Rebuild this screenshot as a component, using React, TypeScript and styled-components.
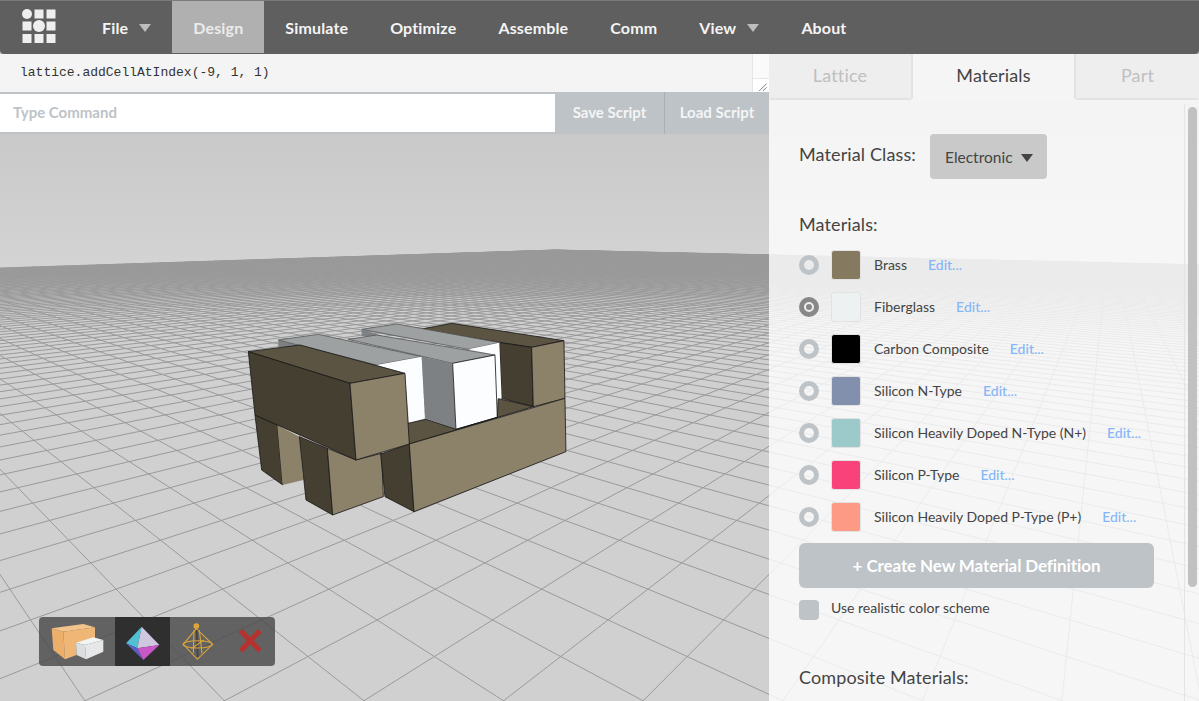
import React, { useMemo } from 'react';
import styled, { createGlobalStyle } from 'styled-components';

const GlobalStyle = createGlobalStyle`
    html, body {
        margin: 0;
        height: 100%;
        overflow: hidden;
        background: #cbcbcb;
        font-family: "Lato", "Liberation Sans", sans-serif;
    }
    * {
        box-sizing: border-box;
    }
`;

const navItems = [
    { label: 'File', caret: true },
    { label: 'Design', active: true },
    { label: 'Simulate' },
    { label: 'Optimize' },
    { label: 'Assemble' },
    { label: 'Comm' },
    { label: 'View', caret: true },
    { label: 'About' },
];

const materials = [
    { name: 'Brass', color: '#85795f' },
    { name: 'Fiberglass', color: '#eef1f2', selected: true },
    { name: 'Carbon Composite', color: '#000000' },
    { name: 'Silicon N-Type', color: '#8290ad' },
    { name: 'Silicon Heavily Doped N-Type (N+)', color: '#9ccaca' },
    { name: 'Silicon P-Type', color: '#f9427a' },
    { name: 'Silicon Heavily Doped P-Type (P+)', color: '#fd9a86' },
];

// perspective of the ground plane: far corner and the two vanishing points
const APEX = [555, 250];
const VP_RIGHT = [1110, 232];
const VP_LEFT = [-230, 232];
const CELL = 0.004;
const PHASE = 0.0008;
const W_MAX = 0.975;

const project = (s: number, t: number) => {
    const d = 1 - s - t;
    const x = (APEX[0] - s * VP_RIGHT[0] - t * VP_LEFT[0]) / d;
    const y = (APEX[1] - s * VP_RIGHT[1] - t * VP_LEFT[1]) / d;
    return `${x.toFixed(1)} ${y.toFixed(1)}`;
};

const buildGrid = () => {
    let d = '';
    for (let a = PHASE; a < W_MAX; a += CELL) {
        d += `M${project(a, 0)}L${project(a, W_MAX - a)}`;
        d += `M${project(0, a)}L${project(W_MAX - a, a)}`;
    }
    return d;
};

const Logo: React.FC = () => (
    <LogoMark viewBox="0 0 34 35">
        <circle cx="5" cy="5" r="5" fill="#efefef" />
        <rect x="12.5" y="0.5" width="9" height="9" fill="#efefef" />
        <rect x="24.5" y="0.5" width="9" height="9" fill="#efefef" />
        <rect x="0.5" y="12.5" width="9" height="9" fill="#efefef" />
        <circle cx="17" cy="17" r="6" fill="#efefef" />
        <rect x="24.5" y="12.5" width="9" height="9" fill="#efefef" />
        <rect x="0.5" y="25" width="9" height="9" fill="#efefef" />
        <rect x="12.5" y="25" width="9" height="9" fill="#efefef" />
        <rect x="24.5" y="25" width="9" height="9" fill="#efefef" />
    </LogoMark>
);

const Scene: React.FC = () => {
    const grid = useMemo(buildGrid, []);
    return (
        <SceneCanvas viewBox="0 54 1199 647">
            <defs>
                <linearGradient id="sky" x1="0" y1="0" x2="0" y2="1">
                    <stop offset="0" stopColor="#c9c9c9" />
                    <stop offset="1" stopColor="#d4d4d4" />
                </linearGradient>
            </defs>
            <rect x="0" y="134" width="1199" height="140" fill="url(#sky)" />
            <rect x="0" y="54" width="1199" height="80" fill="#c9c9c9" />
            <polygon points="555,250 1300,269 1300,800 -100,800 -100,271" fill="#d0d0d0" />
            <path d={grid} stroke="#9a9a9a" strokeWidth="1" fill="none" />

            {/* the lattice model, coordinates at 3x */}
            <g transform="translate(220 300) scale(0.3333)" stroke="#161616" strokeWidth="2.4" strokeLinejoin="round">
                <polygon points="600,88 695,70 1032,122 935,142" fill="#5c5442" />
                <polygon points="838,128 935,142 940,320 845,295" fill="#453f31" />
                <polygon points="935,142 1032,122 1035,295 940,320" fill="#8c8169" />
                <polygon points="425,88 530,72 840,128 745,148" fill="#9da1a2" stroke="#555" />
                <polygon points="425,88 425,108 500,112" fill="#7e8184" stroke="none" />
                <polygon points="745,148 838,128 845,295 830,300 825,165" fill="#fbfdff" stroke="none" />
                <polygon points="175,120 175,142 260,142" fill="#7e8184" stroke="none" />
                <polygon points="175,120 295,103 605,170 470,195" fill="#9da1a2" stroke="#555" />
                <polygon points="385,118 470,105 825,165 698,190" fill="#9da1a2" stroke="#555" />
                <polygon points="470,195 605,170 615,355 568,370 555,220" fill="#fbfdff" stroke="none" />
                <polygon points="605,170 698,190 708,388 615,355" fill="#7e8184" stroke="none" />
                <polygon points="698,190 825,165 832,352 708,388" fill="#fbfdff" />
                <polygon points="555,372 618,358 708,388 832,352 835,296 940,320 568,432" fill="#5c5442" />
                <polygon points="105,345 172,375 188,555 125,510" fill="#453f31" />
                <polygon points="172,375 238,410 250,540 188,555" fill="#8c8169" stroke="none" />
                <polygon points="238,410 322,445 338,645 258,600" fill="#453f31" />
                <polygon points="322,445 408,480 485,460 490,590 338,645" fill="#8c8169" />
                <polygon points="482,462 568,432 582,635 495,590" fill="#453f31" />
                <polygon points="568,432 1035,295 1038,455 582,635" fill="#8c8169" />
                <polygon points="85,155 240,135 555,220 390,250" fill="#5c5442" />
                <polygon points="85,155 390,250 408,480 105,345" fill="#453f31" />
                <polygon points="390,250 555,220 568,432 408,480" fill="#8c8169" />
            </g>
        </SceneCanvas>
    );
};

const ViewToolbar: React.FC = () => (
    <Toolbar>
        <Thumb $width={76}>
            <svg viewBox="57 51 228 147" width="76" height="49">
                <polygon points="95,85 190,72 225,82 130,95" fill="#f2c48c" />
                <polygon points="95,85 130,95 135,178 100,150" fill="#ebae6b" />
                <polygon points="130,95 225,82 225,125 168,128 170,165 135,178" fill="#efb676" />
                <polygon points="168,128 220,112 250,120 195,135" fill="#f3f4f4" />
                <polygon points="168,128 195,135 198,178 170,165" fill="#dcdee0" />
                <polygon points="195,135 250,120 250,155 198,178" fill="#e6e7e8" />
            </svg>
        </Thumb>
        <Thumb $width={55} $active>
            <svg viewBox="285 51 165 147" width="55" height="49">
                <polygon points="365,80 318,130 352,145" fill="#50c0d2" />
                <polygon points="365,80 352,145 418,135" fill="#cfc6e0" />
                <polygon points="318,130 352,145 370,180" fill="#5a60c2" />
                <polygon points="352,145 418,135 370,180" fill="#c858c8" />
            </svg>
        </Thumb>
        <Thumb $width={55}>
            <svg viewBox="450 51 165 147" width="55" height="49" fill="none" stroke="#dda63a" strokeWidth="3.2">
                <circle cx="529" cy="78" r="7" fill="#dda63a" />
                <path d="M529 86 L490 133 L532 178 L578 133 Z" />
                <path d="M530 90 L533 170" stroke="#444" strokeWidth="5" />
                <path d="M522 90 L520 160 M538 90 L546 160" />
                <ellipse cx="533" cy="133" rx="44" ry="11" />
                <path d="M514 146 L552 120" />
            </svg>
        </Thumb>
        <Thumb $width={50}>
            <svg viewBox="615 51 150 147" width="50" height="49" stroke="#b5322f" strokeWidth="15">
                <path d="M662 92 L720 152 M720 92 L662 152" />
            </svg>
        </Thumb>
    </Toolbar>
);

const App: React.FC = () => {
    return (
        <>
            <GlobalStyle />
            <Page>
                <TopNav>
                    <LogoSlot>
                        <Logo />
                    </LogoSlot>
                    {navItems.map((item) => (
                        <NavItem key={item.label} $active={item.active}>
                            {item.label}
                            {item.caret && <NavCaret />}
                        </NavItem>
                    ))}
                </TopNav>
                <Workspace>
                    <Scene />
                    <MainColumn>
                        <CommandLog>
                            <LogText>lattice.addCellAtIndex(-9, 1, 1)</LogText>
                            <LogGutter>
                                <ResizeGrip viewBox="0 0 16 14">
                                    <path d="M6 13 L14 5 M10 13 L14 9" stroke="#777" strokeWidth="1" />
                                </ResizeGrip>
                            </LogGutter>
                        </CommandLog>
                        <CommandBar>
                            <CommandInput placeholder="Type Command" readOnly />
                            <ScriptButton $width={109}>Save Script</ScriptButton>
                            <ScriptButton $width={105} $divider>Load Script</ScriptButton>
                        </CommandBar>
                        <ViewToolbar />
                    </MainColumn>
                    <SidePanel>
                        <Tabs>
                            <Tab $width={142}>Lattice</Tab>
                            <Tab $width={165} $active>Materials</Tab>
                            <Tab $width={123}>Part</Tab>
                        </Tabs>
                        <PanelBody>
                            <ClassRow>
                                <SectionLabel>Material Class:</SectionLabel>
                                <ClassSelect>
                                    Electronic
                                    <SelectCaret />
                                </ClassSelect>
                            </ClassRow>
                            <MaterialsLabel>Materials:</MaterialsLabel>
                            <MaterialList>
                                {materials.map((m) => (
                                    <MaterialRow key={m.name}>
                                        <Radio $selected={m.selected} />
                                        <Swatch $color={m.color} />
                                        <MaterialName>{m.name}</MaterialName>
                                        <EditLink>Edit...</EditLink>
                                    </MaterialRow>
                                ))}
                            </MaterialList>
                            <CreateButton>+ Create New Material Definition</CreateButton>
                            <CheckRow>
                                <CheckBox />
                                <CheckLabel>Use realistic color scheme</CheckLabel>
                            </CheckRow>
                            <CompositeLabel>Composite Materials:</CompositeLabel>
                        </PanelBody>
                        <ScrollTrack>
                            <ScrollThumb />
                        </ScrollTrack>
                    </SidePanel>
                </Workspace>
            </Page>
        </>
    );
};

const Page = styled.div`
    display: flex;
    flex-direction: column;
    width: 1199px;
    height: 701px;
    overflow: hidden;
    background: #c9c9c9;
`;

const TopNav = styled.nav`
    display: flex;
    align-items: stretch;
    height: 54px;
    padding-bottom: 1px;
    background: #5f5f5f;
    border-top: 1px solid #7b7b7b;
    border-radius: 0 0 4px 4px;
    position: relative;
    z-index: 2;
`;

const LogoSlot = styled.div`
    display: flex;
    width: 81px;
    padding: 8px 0 0 22px;
`;

const LogoMark = styled.svg`
    width: 34px;
    height: 35px;
`;

const NavItem = styled.div<{ $active?: boolean }>`
    display: flex;
    align-items: center;
    padding: 0 21px;
    font-size: 16px;
    font-weight: 700;
    letter-spacing: 0.15px;
    color: ${({ $active }) => ($active ? '#ebebeb' : '#f4f4f4')};
    background: ${({ $active }) => ($active ? '#b0b0b0' : 'transparent')};
`;

const NavCaret = styled.span`
    width: 0;
    height: 0;
    margin: 2px 0 0 11px;
    border-left: 6px solid transparent;
    border-right: 6px solid transparent;
    border-top: 8px solid #bdbdbd;
`;

const Workspace = styled.div`
    position: relative;
    display: flex;
    flex: 1;
    min-height: 0;
`;

const SceneCanvas = styled.svg`
    position: absolute;
    inset: 0;
    width: 1199px;
    height: 647px;
`;

const MainColumn = styled.div`
    position: relative;
    width: 769px;
    flex-shrink: 0;
`;

const CommandLog = styled.div`
    display: flex;
    height: 38px;
    background: #f4f4f4;
`;

const LogText = styled.div`
    flex: 1;
    padding: 11px 20px 0;
    font-family: "Liberation Mono", monospace;
    font-size: 13px;
    color: #333;
`;

const LogGutter = styled.div`
    display: flex;
    align-items: flex-end;
    width: 17px;
    background: #fafafa;
    border-left: 1px solid #e6e6e6;
`;

const ResizeGrip = styled.svg`
    width: 16px;
    height: 14px;
    background: #fff;
    border-top: 1px solid #e6e6e6;
`;

const CommandBar = styled.div`
    display: flex;
    height: 42px;
    border-top: 2px solid #bdc3c7;
    border-bottom: 2px solid #bdc3c7;
    background: #fff;
`;

const CommandInput = styled.input`
    flex: 1;
    min-width: 0;
    padding: 0 13px 2px;
    border: none;
    outline: none;
    background: #fff;
    font-family: "Lato", sans-serif;
    font-size: 15px;
    font-weight: 700;

    &::placeholder {
        color: #bdc3c7;
        opacity: 1;
    }
`;

const ScriptButton = styled.div<{ $width: number; $divider?: boolean }>`
    display: flex;
    align-items: center;
    justify-content: center;
    width: ${({ $width }) => $width}px;
    margin: -2px 0;
    padding-bottom: 2px;
    background: #bdc3c7;
    border-left: ${({ $divider }) => ($divider ? '1px solid #a9afb3' : 'none')};
    color: #f4f5f5;
    font-size: 15px;
    font-weight: 700;
`;

const Toolbar = styled.div`
    position: absolute;
    left: 39px;
    top: 563px;
    display: flex;
    height: 49px;
    border-radius: 4px;
    overflow: hidden;
    background: rgba(76, 76, 76, 0.84);
`;

const Thumb = styled.div<{ $width: number; $active?: boolean }>`
    display: flex;
    width: ${({ $width }) => $width}px;
    background: ${({ $active }) => ($active ? '#2f2f2f' : 'transparent')};
`;

const SidePanel = styled.aside`
    position: relative;
    display: flex;
    flex-direction: column;
    width: 430px;
    background: rgba(255, 255, 255, 0.8);
    color: #444;
`;

const Tabs = styled.div`
    display: flex;
    height: 46px;
    flex-shrink: 0;
`;

const Tab = styled.div<{ $width: number; $active?: boolean }>`
    display: flex;
    align-items: center;
    justify-content: center;
    width: ${({ $width }) => $width}px;
    padding-bottom: 2px;
    font-size: 18px;
    letter-spacing: 0.15px;
    color: ${({ $active }) => ($active ? '#444' : '#bfbfbf')};
    background: ${({ $active }) => ($active ? '#f5f5f5' : '#eeeeee')};
    border-bottom: 2px solid ${({ $active }) => ($active ? 'transparent' : '#e3e3e3')};
    border-left: 2px solid ${({ $active }) => ($active ? '#e3e3e3' : 'transparent')};
    border-right: 2px solid ${({ $active }) => ($active ? '#e3e3e3' : 'transparent')};
`;

const PanelBody = styled.div`
    flex: 1;
    min-height: 0;
    padding: 34px 45px 0 30px;
`;

const ClassRow = styled.div`
    display: flex;
    align-items: flex-start;
    gap: 14px;
`;

const SectionLabel = styled.div`
    width: 117px;
    white-space: nowrap;
    font-size: 18px;
    line-height: 22px;
    letter-spacing: 0.12px;
    color: #444;
    padding-top: 9px;
`;

const ClassSelect = styled.div`
    display: flex;
    align-items: center;
    width: 117px;
    height: 45px;
    padding: 0 0 0 15px;
    border-radius: 4px;
    background: #c9c9c9;
    font-size: 15.5px;
    color: #444;
`;

const SelectCaret = styled.span`
    width: 0;
    height: 0;
    margin: 2px 0 0 8px;
    border-left: 6px solid transparent;
    border-right: 6px solid transparent;
    border-top: 8px solid #444;
`;

const MaterialsLabel = styled(SectionLabel)`
    margin-top: 34px;
    padding-top: 0;
`;

const MaterialList = styled.div`
    display: flex;
    flex-direction: column;
    gap: 12px;
    margin-top: 15px;
`;

const MaterialRow = styled.div`
    display: flex;
    align-items: center;
    height: 30px;
    font-size: 14px;
`;

const Radio = styled.span<{ $selected?: boolean }>`
    position: relative;
    width: 20px;
    height: 20px;
    flex-shrink: 0;
    border-radius: 50%;
    border: 5px solid ${({ $selected }) => ($selected ? '#888888' : '#bdc3c7')};

    &::after {
        content: '';
        display: ${({ $selected }) => ($selected ? 'block' : 'none')};
        position: absolute;
        inset: 2px;
        border-radius: 50%;
        background: #888888;
    }
`;

const Swatch = styled.span<{ $color: string }>`
    width: 30px;
    height: 30px;
    flex-shrink: 0;
    margin-left: 12px;
    border-radius: 3px;
    border: 1px solid #e2e2e2;
    background: ${({ $color }) => $color};
`;

const MaterialName = styled.span`
    margin-left: 13px;
    padding-bottom: 2px;
    color: #444;
`;

const EditLink = styled.a`
    margin-left: 21px;
    padding-bottom: 2px;
    color: #85b6f7;
    font-weight: 500;
`;

const CreateButton = styled.div`
    display: flex;
    align-items: center;
    justify-content: center;
    width: 355px;
    height: 45px;
    margin-top: 11px;
    border-radius: 6px;
    background: #bdc3c7;
    color: #fff;
    font-size: 17px;
    font-weight: 700;
    letter-spacing: -0.1px;
`;

const CheckRow = styled.div`
    display: flex;
    align-items: center;
    gap: 12px;
    margin-top: 11px;
`;

const CheckBox = styled.span`
    width: 20px;
    height: 20px;
    border-radius: 4px;
    background: #bdc3c7;
`;

const CheckLabel = styled.span`
    padding-bottom: 4px;
    font-size: 14px;
    color: #444;
`;

const CompositeLabel = styled(SectionLabel)`
    margin-top: 46px;
    padding-top: 0;
`;

const ScrollTrack = styled.div`
    position: absolute;
    top: 50px;
    right: 0;
    bottom: 0;
    width: 15px;
    padding: 3px 2px 0 3px;
    border-left: 1px solid #e4e4e4;
`;

const ScrollThumb = styled.div`
    height: 480px;
    border-radius: 5px;
    background: #c1c1c1;
`;

export default App;
